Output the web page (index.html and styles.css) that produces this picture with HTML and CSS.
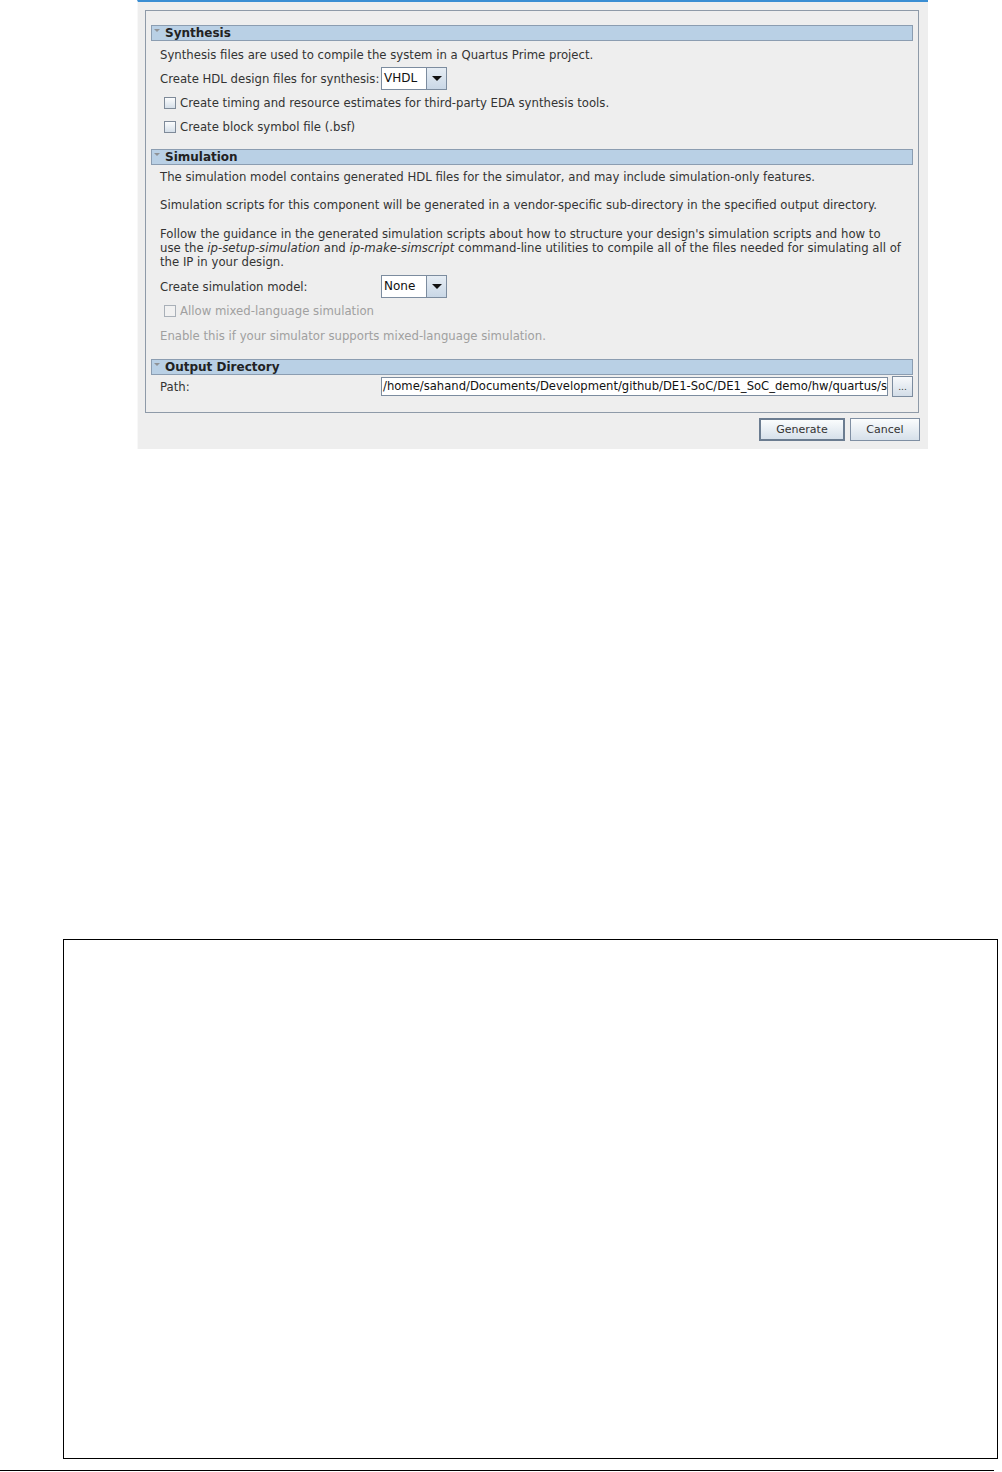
FILE: index.html
```html
<!DOCTYPE html>
<html lang="en">
<head>
    <meta charset="UTF-8">
    <title>Generate</title>
    <link rel="stylesheet" href="styles.css">
</head>
<body>
    <div class="dialog">
        <div class="panel">
            <div class="section-head"><span class="tri"></span>Synthesis</div>
            <p class="note syn-note">Synthesis files are used to compile the system in a Quartus Prime project.</p>
            <div class="field hdl-row">
                <span class="field-label">Create HDL design files for synthesis:</span>
                <div class="combo"><span class="combo-value">VHDL</span><span class="combo-btn"><i class="arrow"></i></span></div>
            </div>
            <div class="check first"><span class="box"></span>Create timing and resource estimates for third-party EDA synthesis tools.</div>
            <div class="check second"><span class="box"></span>Create block symbol file (.bsf)</div>

            <div class="section-head sim-head"><span class="tri"></span>Simulation</div>
            <p class="note sim-1">The simulation model contains generated HDL files for the simulator, and may include simulation-only features.</p>
            <p class="note sim-2">Simulation scripts for this component will be generated in a vendor-specific sub-directory in the specified output directory.</p>
            <p class="note sim-3">Follow the guidance in the generated simulation scripts about how to structure your design's simulation scripts and how to<br>use the <em>ip-setup-simulation</em> and <em>ip-make-simscript</em> command-line utilities to compile all of the files needed for simulating all of the IP in your design.</p>
            <div class="field sim-row">
                <span class="field-label">Create simulation model:</span>
                <div class="combo"><span class="combo-value">None</span><span class="combo-btn"><i class="arrow"></i></span></div>
            </div>
            <div class="check disabled mixed"><span class="box"></span>Allow mixed-language simulation</div>
            <p class="note disabled enable-note">Enable this if your simulator supports mixed-language simulation.</p>

            <div class="section-head out-head"><span class="tri"></span>Output Directory</div>
            <div class="field path-row">
                <span class="field-label">Path:</span>
                <div class="path-input">/home/sahand/Documents/Development/github/DE1-SoC/DE1_SoC_demo/hw/quartus/soc_system</div>
                <button class="browse">...</button>
            </div>
        </div>
        <div class="actions">
            <button class="btn default">Generate</button>
            <button class="btn cancel">Cancel</button>
        </div>
    </div>

    <div class="canvas"></div>
    <div class="rule"></div>
</body>
</html>
```

FILE: styles.css
```css
body {
    margin: 0;
    background-color: #fff;
    color: #333;
    font-family: "DejaVu Sans", sans-serif;
    font-size: 11.7px;
}
.dialog {
    margin-left: 137px;
    width: 791px;
    height: 449px;
    box-sizing: border-box;
    background-color: #eeeeee;
    border-top: 2px solid #3a8ed3;
    border-left: 1px solid #f8f8f8;
    padding: 8px 9px 0 7px;
}
.panel {
    border: 1px solid #8e9aa8;
    padding: 14px 5px 15px 5px;
}
.section-head {
    display: flex;
    align-items: center;
    height: 14px;
    line-height: 14px;
    background-color: #b9d0e5;
    border: 1px solid #8b9db1;
    padding-left: 2px;
    font-size: 12px;
    font-weight: bold;
    color: #222;
}
.tri {
    width: 0;
    height: 0;
    border-left: 3px solid transparent;
    border-right: 3px solid transparent;
    border-top: 3px solid #8f9296;
    margin-right: 5px;
    margin-top: -5px;
}
.note {
    margin: 0;
    padding-left: 9px;
    line-height: 14px;
}
.note em {
    font-style: italic;
}
.syn-note { margin-top: 7px; }
.sim-head { margin-top: 12px; }
.sim-1 { margin-top: 5px; }
.sim-2 { margin-top: 14px; }
.sim-3 { margin-top: 15px; padding-right: 5px; }
.out-head { margin-top: 16px; }
.enable-note { margin-top: 8px; }

.field {
    display: flex;
    align-items: center;
    padding-left: 9px;
}
.field-label {
    width: 221px;
    flex-shrink: 0;
    white-space: nowrap;
}
.hdl-row { margin-top: 5px; height: 23px; }
.sim-row { margin-top: 6px; height: 23px; }
.path-row { margin-top: 1px; height: 21px; }

.combo {
    display: flex;
    width: 66px;
    height: 23px;
    box-sizing: border-box;
    border: 1px solid #7c8c9f;
    background-color: #fff;
}
.combo-value {
    flex: 1;
    padding-left: 2px;
    padding-top: 3px;
    font-size: 12px;
    color: #111;
}
.combo-btn {
    width: 19px;
    display: flex;
    align-items: center;
    justify-content: center;
    border-left: 1px solid #7c8c9f;
    background: linear-gradient(#e6edf4, #c9d7e6);
}
.arrow {
    width: 0;
    height: 0;
    border-left: 5px solid transparent;
    border-right: 5px solid transparent;
    border-top: 5px solid #111;
}

.check {
    display: flex;
    align-items: center;
    height: 21px;
    padding-left: 13px;
}
.check.first { margin-top: 2px; }
.check.second { margin-top: 3px; }
.check.mixed { margin-top: 2px; }
.box {
    width: 10px;
    height: 10px;
    border: 1px solid #7e8a99;
    background: linear-gradient(#fbfcfd, #d5dfe9);
    margin-right: 4px;
}
.disabled {
    color: #a0a0a0;
}
.disabled .box {
    border-color: #a9b0b8;
    background: #f1f1f1;
}

.path-input {
    width: 507px;
    height: 19px;
    box-sizing: border-box;
    border: 1px solid #7c8c9f;
    background-color: #fff;
    color: #111;
    font-size: 11.6px;
    line-height: 17px;
    padding-left: 1px;
    white-space: nowrap;
    overflow: hidden;
}
.browse {
    margin-left: 4px;
    width: 21px;
    height: 21px;
    padding: 0;
    border: 1px solid #7c8c9f;
    background: linear-gradient(#f7f9fb, #d3dde8);
    font-family: "DejaVu Sans", sans-serif;
    font-size: 9px;
    color: #333;
}

.actions {
    display: flex;
    justify-content: flex-end;
    gap: 5px;
    margin-top: 5px;
    margin-right: -1px;
}
.btn {
    height: 23px;
    padding: 0;
    border: 1px solid #7f8fa3;
    background: linear-gradient(#fafcfd, #d6e0ea);
    font-family: "DejaVu Sans", sans-serif;
    font-size: 11px;
    color: #333;
}
.btn.default {
    width: 86px;
    border: 2px solid #6b7c90;
}
.btn.cancel {
    width: 70px;
}

.canvas {
    margin: 490px 0 0 63px;
    width: 935px;
    height: 520px;
    box-sizing: border-box;
    border: 1px solid #000;
}
.rule {
    margin-top: 11px;
    width: 994px;
    border-top: 1px solid #000;
}
```
